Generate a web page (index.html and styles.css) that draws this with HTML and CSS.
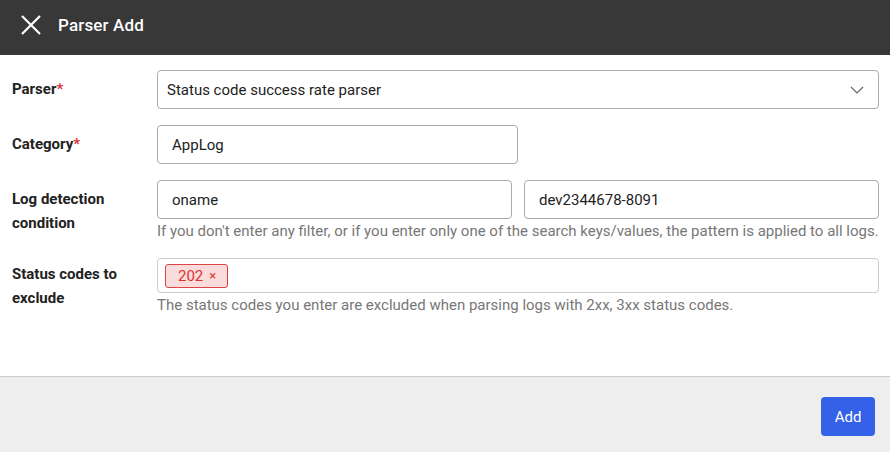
FILE: index.html
```html
<!DOCTYPE html>
<html>
<head>
<meta charset="utf-8">
<link rel="stylesheet" href="styles.css">
</head>
<body>
<div class="dialog">
  <header class="hdr">
    <svg class="close" width="20" height="20" viewBox="0 0 20 20"><path d="M1 1L19 19M19 1L1 19" stroke="#fff" stroke-width="2.2" fill="none"/></svg>
    <span class="title">Parser Add</span>
  </header>
  <main class="body">
    <div class="row">
      <div class="lbl">Parser<span class="req">*</span></div>
      <div class="ctl">
        <div class="field select">
          <span>Status code success rate parser</span>
          <svg width="14" height="8" viewBox="0 0 14 8"><path d="M1 1L7 7L13 1" stroke="#666" stroke-width="1.2" fill="none"/></svg>
        </div>
      </div>
    </div>
    <div class="row">
      <div class="lbl">Category<span class="req">*</span></div>
      <div class="ctl">
        <div class="field half">AppLog</div>
      </div>
    </div>
    <div class="row">
      <div class="lbl">Log detection condition</div>
      <div class="ctl">
        <div class="pair">
          <div class="field">oname</div>
          <div class="field">dev2344678-8091</div>
        </div>
        <div class="help">If you don't enter any filter, or if you enter only one of the search keys/values, the pattern is applied to all logs.</div>
      </div>
    </div>
    <div class="row">
      <div class="lbl lbl-tight">Status codes to exclude</div>
      <div class="ctl">
        <div class="field tags"><span class="tag">202 <span class="x">×</span></span></div>
        <div class="help">The status codes you enter are excluded when parsing logs with 2xx, 3xx status codes.</div>
      </div>
    </div>
  </main>
  <footer class="ftr">
    <button class="btn">Add</button>
  </footer>
</div>
</body>
</html>
```
FILE: styles.css
```css
* { box-sizing: border-box; }
html, body { margin: 0; padding: 0; }
body {
  font-family: Roboto, "Liberation Sans", sans-serif;
  font-size: 15px;
  color: #222;
  width: 890px;
  height: 452px;
  overflow: hidden;
}
.dialog { display: flex; flex-direction: column; height: 452px; }
.hdr {
  height: 55px;
  background: #383838;
  display: flex;
  align-items: center;
  padding: 0 0 6px 21px;
  color: #fff;
}
.close { margin-right: 17px; }
.title { font-size: 17px; font-weight: 500; letter-spacing: 0.15px; }
.body {
  flex: 1;
  padding: 15px 11px 0 12px;
  display: flex;
  flex-direction: column;
  gap: 16px;
  background: #fff;
}
.row { display: flex; }
.lbl {
  width: 145px;
  font-weight: 700;
  color: #222;
  line-height: 24px;
  padding-top: 7px;
  padding-right: 25px;
}
.lbl-tight { padding-top: 4px; }
.req { color: #d33; }
.ctl { flex: 1; }
.field {
  height: 39px;
  border: 1px solid #aaa;
  border-radius: 4px;
  display: flex;
  align-items: center;
  padding: 0 14px;
  color: #222;
}
.select { justify-content: space-between; padding: 0 14px 0 9px; }
.half { width: 361px; }
.pair { display: grid; grid-template-columns: 355px 1fr; gap: 12px; }
.help { color: #777; line-height: 22px; margin-top: 1px; }
.tags { height: 35px; padding: 0 7px; border-color: #ccc; }
.tag {
  display: inline-flex;
  align-items: center;
  height: 24px;
  padding: 0 10px 0 12px;
  background: #fbdcdc;
  border: 1px solid #d44;
  border-radius: 3px;
  color: #d33;
  font-size: 15px;
  width: 63px;
}
.tag .x { margin-left: 6px; font-size: 13px; }
.ftr {
  height: 76px;
  background: #eee;
  border-top: 1px solid #ccc;
  display: flex;
  justify-content: flex-end;
  align-items: flex-start;
  padding: 20px 15px 0 0;
}
.btn {
  height: 39px;
  width: 54px;
  background: #3361e8;
  color: #fff;
  border: none;
  border-radius: 4px;
  font-family: inherit;
  font-size: 15px;
}
```
